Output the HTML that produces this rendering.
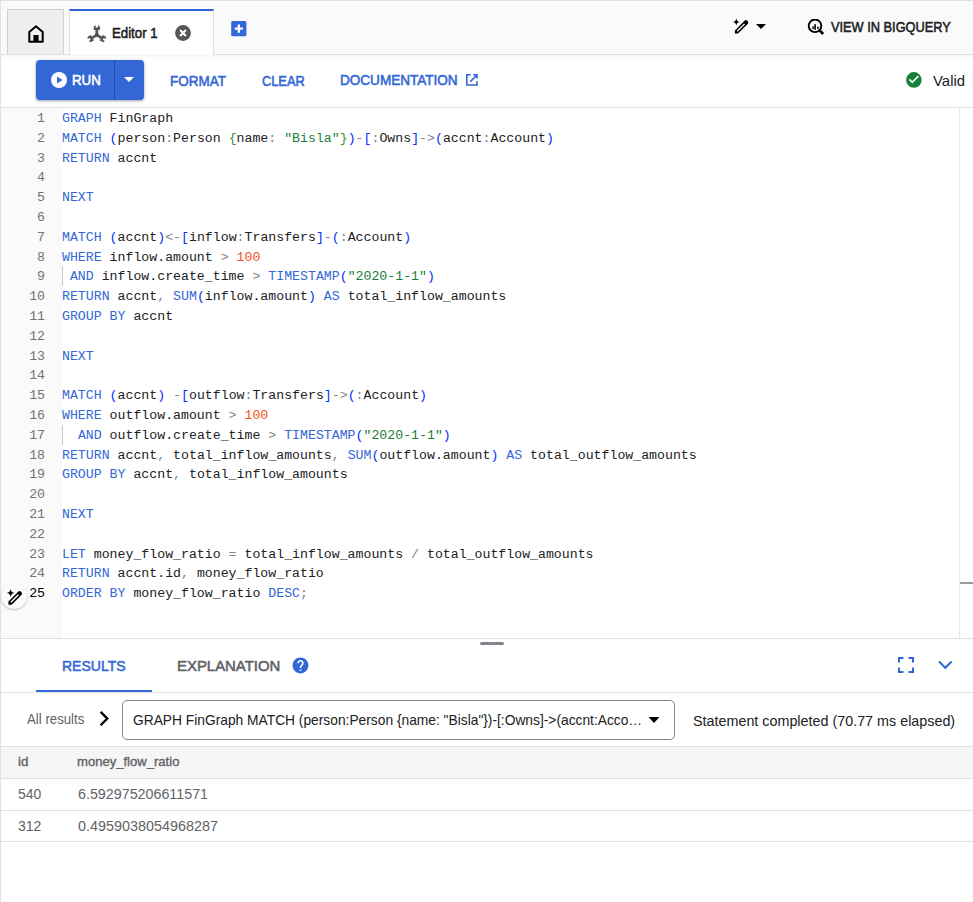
<!DOCTYPE html>
<html><head><meta charset="utf-8">
<style>
*{box-sizing:border-box;margin:0;padding:0}
html,body{width:973px;height:902px;overflow:hidden;background:#fff;font-family:"Liberation Sans",sans-serif;color:#202124}
.abs{position:absolute}
#frame{position:absolute;left:0;top:0;width:973px;height:902px;border-left:1px solid #e0e0e0;border-top:1px solid #e0e0e0}
#tabbar{position:absolute;left:1px;top:1px;width:972px;height:54px;background:#fafafa;border-bottom:1px solid #e0e0e0}
#hometab{position:absolute;left:7px;top:9px;width:57px;height:45px;background:#efefef;border:1px solid #d0d0d0;border-bottom:none}
#edtab{position:absolute;left:69px;top:9px;width:145px;height:46px;background:#fff;border-right:1px solid #dedede;border-left:1px solid #e0e0e0;border-top:2px solid #2a62d8}
.t14m{font-size:14px;font-weight:bold}
#toolbar{position:absolute;left:1px;top:55px;width:972px;height:53px;background:linear-gradient(rgba(0,0,0,.035),rgba(0,0,0,0) 4px) #fff;border-bottom:1px solid #e0e0e0}
#run{position:absolute;left:36px;top:60px;width:108px;height:40px;background:#3367d6;border-radius:4px;box-shadow:0 1px 2px rgba(60,64,67,.3),0 1px 3px 1px rgba(60,64,67,.15)}
.btxt{position:absolute;color:#3367d6;font-size:14px;font-weight:bold;white-space:nowrap}
#editor{position:absolute;left:1px;top:108px;width:972px;height:531px;background:#fff;border-bottom:1px solid #e0e0e0}
#gutter{position:absolute;left:0;top:0;width:61px;height:530px;background:#fafafa}
#code{position:absolute;left:61px;top:1px;font-family:"Liberation Mono",monospace;font-size:13.22px;line-height:19.8px;white-space:pre;color:#202124}
#nums{position:absolute;left:0;top:1px;width:44px;text-align:right;white-space:pre;font-family:"Liberation Mono",monospace;font-size:13.22px;line-height:19.8px;color:#737373}
.k{color:#3367d6}.b{color:#0431fa}.g{color:#319331}.s{color:#188038}.o{color:#80868b}.n{color:#f4511e}
.tx{position:absolute;white-space:nowrap;line-height:1}.m{-webkit-text-stroke:0.55px currentColor}.th{font-size:12.7px;-webkit-text-stroke:0.35px currentColor;color:#5f6368}.td{font-size:14px;color:#5f6368}
#results{position:absolute;left:1px;top:639px;width:972px;height:263px;background:#fff}
</style></head><body>
<div id="frame"></div>
<div id="tabbar"></div>
<div id="hometab"></div>
<div id="edtab"></div>
<!-- home icon -->
<svg class="abs" style="left:27px;top:24px" width="18" height="20" viewBox="0 0 18 20"><path d="M9 2.3L2.3 7.9V17.7H15.7V7.9Z" fill="none" stroke="#000" stroke-width="2" stroke-linejoin="round"/><rect x="6.4" y="11" width="5.2" height="7" fill="#000"/></svg>
<!-- wrench/graph icon -->
<svg class="abs" style="left:84px;top:22.5px" width="26" height="24" viewBox="-12.8 -12.5 26 24"><g fill="#555" transform="translate(0 -0.4) scale(0.92)"><path d="M-1.5 0V-5.6H-3.4V-8.6Q-3.4 -9.6 -2.4 -10.2L-1.2 -10.8V-8.2H1.2V-10.8L2.4 -10.2Q3.4 -9.6 3.4 -8.6V-5.6H1.5V0Z"/><path d="M-1.5 0V-5.6H-3.4V-8.6Q-3.4 -9.6 -2.4 -10.2L-1.2 -10.8V-8.2H1.2V-10.8L2.4 -10.2Q3.4 -9.6 3.4 -8.6V-5.6H1.5V0Z" transform="rotate(120)"/><path d="M-1.5 0V-5.6H-3.4V-8.6Q-3.4 -9.6 -2.4 -10.2L-1.2 -10.8V-8.2H1.2V-10.8L2.4 -10.2Q3.4 -9.6 3.4 -8.6V-5.6H1.5V0Z" transform="rotate(240)"/><circle r="2.2"/></g></svg>
<div id="t_editor" class="tx m" style="left:112.20px;top:26.40px;font-size:14.5px;color:#202124;transform:scaleX(0.9120);transform-origin:0 0">Editor 1</div>
<svg class="abs" style="left:175px;top:24.6px" width="16" height="16" viewBox="0 0 16 16"><circle cx="8" cy="8" r="7.9" fill="#555"/><path d="M5.1 5.1L10.9 10.9M10.9 5.1L5.1 10.9" stroke="#fff" stroke-width="2.1"/></svg>
<svg class="abs" style="left:231px;top:21px" width="16" height="16" viewBox="0 0 16 16"><rect x="0.2" y="0" width="15.2" height="15.3" rx="1.5" fill="#3367d6"/><path d="M7.8 3.5V11.8M3.7 7.65H11.9" stroke="#fff" stroke-width="2.3"/></svg>
<!-- right tab bar -->
<svg class="abs" style="left:726px;top:12px" width="26" height="26" viewBox="0 0 26 26"><path d="M10.3 6.2Q10.6 9.7 14.1 10Q10.6 10.3 10.3 13.8Q10 10.3 6.5 10Q10 9.7 10.3 6.2Z" fill="#000"/><g transform="translate(8.9 21.6) rotate(-45)"><path d="M0 0L2.2 -2.2H16.2Q17.7 -2.2 17.7 -0.7V0.7Q17.7 2.2 16.2 2.2H2.2Z" fill="#000"/><path d="M3.3 -0.65H13.6V0.65H3.3Z" fill="#fafafa"/></g></svg>
<svg class="abs" style="left:756px;top:24px" width="10" height="5" viewBox="0 0 10 5"><path d="M0 0H10L5 5Z" fill="#000"/></svg>
<svg class="abs" style="left:807px;top:19px" width="18" height="17" viewBox="0 0 18 17"><circle cx="8" cy="6.8" r="6.3" fill="none" stroke="#000" stroke-width="1.9"/><path d="M12.6 11.4L16.2 15" stroke="#000" stroke-width="2.6"/><rect x="5.4" y="7.3" width="1.4" height="2.7" fill="#000"/><rect x="7.3" y="5.2" width="1.6" height="5.6" fill="#000"/><rect x="10.2" y="7.7" width="1.5" height="2.2" fill="#000"/></svg>
<div id="t_view" class="tx m" style="left:831.00px;top:20.40px;font-size:14.5px;color:#202124;transform:scaleX(0.8817);transform-origin:0 0">VIEW IN BIGQUERY</div>

<div id="toolbar"></div>
<div id="run"></div>
<div class="abs" style="left:114px;top:60px;width:1px;height:40px;background:#1f4fa8"></div>
<svg class="abs" style="left:51px;top:72px" width="16" height="16" viewBox="0 0 16 16"><circle cx="8" cy="8" r="8" fill="#fff"/><path d="M6 4.5L11.5 8 6 11.5Z" fill="#3367d6"/></svg>
<div id="t_run" class="tx m" style="left:72.20px;top:73.00px;font-size:14.5px;color:#fff;transform:scaleX(0.9167);transform-origin:0 0">RUN</div>
<svg class="abs" style="left:124px;top:77px" width="10" height="5" viewBox="0 0 10 5"><path d="M0 0H10L5 5Z" fill="#fff"/></svg>
<div id="t_format" class="tx m" style="left:169.80px;top:74.40px;font-size:14.5px;color:#3367d6;transform:scaleX(0.9300);transform-origin:0 0">FORMAT</div>
<div id="t_clear" class="tx m" style="left:262.20px;top:74.40px;font-size:14.5px;color:#3367d6;transform:scaleX(0.8834);transform-origin:0 0">CLEAR</div>
<div id="t_doc" class="tx m" style="left:339.60px;top:73.20px;font-size:14.5px;color:#3367d6;transform:scaleX(0.9342);transform-origin:0 0">DOCUMENTATION</div>
<svg class="abs" style="left:466px;top:74px" width="12" height="12" viewBox="0 0 12 12"><path d="M4.7 0.8H0.8V11H11V7.2M7.2 0.8H11V4.6M4.2 7.8L10.6 1.4" fill="none" stroke="#3367d6" stroke-width="1.6"/></svg>
<svg class="abs" style="left:906px;top:72px" width="16" height="16" viewBox="0 0 16 16"><circle cx="7.9" cy="7.9" r="7.8" fill="#188038"/><path d="M3.4 7.4L6.2 10.3 12.3 4.1" fill="none" stroke="#fff" stroke-width="1.6"/></svg>
<div id="t_valid" class="tx" style="left:933.40px;top:73.40px;font-size:15px;color:#202124;transform:scaleX(0.9939);transform-origin:0 0">Valid</div>

<div id="editor">
<div id="gutter"></div>
<div class="abs" style="left:958px;top:0;width:1px;height:530px;background:#e8e8e8"></div>
<div class="abs" style="left:959px;top:474px;width:13px;height:2px;background:#999"></div>
<div class="abs" style="left:61px;top:158px;width:1px;height:20px;background:#c8c8c8"></div>
<div class="abs" style="left:61px;top:317px;width:1px;height:20px;background:#c8c8c8"></div>
<div class="abs" style="left:0px;top:475px;width:26px;height:26px;border-radius:50%;background:#fcfcfc;box-shadow:0 1px 2px rgba(0,0,0,.25)"></div>
<svg class="abs" style="left:0px;top:475px" width="26" height="26" viewBox="0 0 26 26"><path d="M9.6 5.8Q9.9 9.6 13.7 9.9Q9.9 10.2 9.6 14Q9.3 10.2 5.5 9.9Q9.3 9.6 9.6 5.8Z" fill="#000"/><g transform="translate(7.4 21.7) rotate(-45)"><path d="M0 0L2.3 -2.3H16.4Q18 -2.3 18 -0.7V0.7Q18 2.3 16.4 2.3H2.3Z" fill="#000"/><path d="M3.4 -0.7H14.2V0.7H3.4Z" fill="#fcfcfc"/></g></svg>
<div id="nums">1
2
3
4
5
6
7
8
9
10
11
12
13
14
15
16
17
18
19
20
21
22
23
24
<span style="color:#000">25</span></div>
<div id="code"><span class="k">GRAPH</span> FinGraph
<span class="k">MATCH</span> <span class="b">(</span>person<span class="o">:</span>Person <span class="g">{</span>name<span class="o">:</span> <span class="s">"Bisla"</span><span class="g">}</span><span class="b">)</span><span class="o">-</span><span class="b">[</span><span class="o">:</span>Owns<span class="b">]</span><span class="o">-&gt;</span><span class="b">(</span>accnt<span class="o">:</span>Account<span class="b">)</span>
<span class="k">RETURN</span> accnt

<span class="k">NEXT</span>

<span class="k">MATCH</span> <span class="b">(</span>accnt<span class="b">)</span><span class="o">&lt;-</span><span class="b">[</span>inflow<span class="o">:</span>Transfers<span class="b">]</span><span class="o">-</span><span class="b">(</span><span class="o">:</span>Account<span class="b">)</span>
<span class="k">WHERE</span> inflow.amount <span class="o">&gt;</span> <span class="n">100</span>
 <span class="k">AND</span> inflow.create_time <span class="o">&gt;</span> <span class="k">TIMESTAMP</span><span class="b">(</span><span class="s">"2020-1-1"</span><span class="b">)</span>
<span class="k">RETURN</span> accnt<span class="o">,</span> <span class="k">SUM</span><span class="b">(</span>inflow.amount<span class="b">)</span> <span class="k">AS</span> total_inflow_amounts
<span class="k">GROUP BY</span> accnt

<span class="k">NEXT</span>

<span class="k">MATCH</span> <span class="b">(</span>accnt<span class="b">)</span> <span class="o">-</span><span class="b">[</span>outflow<span class="o">:</span>Transfers<span class="b">]</span><span class="o">-&gt;</span><span class="b">(</span><span class="o">:</span>Account<span class="b">)</span>
<span class="k">WHERE</span> outflow.amount <span class="o">&gt;</span> <span class="n">100</span>
  <span class="k">AND</span> outflow.create_time <span class="o">&gt;</span> <span class="k">TIMESTAMP</span><span class="b">(</span><span class="s">"2020-1-1"</span><span class="b">)</span>
<span class="k">RETURN</span> accnt<span class="o">,</span> total_inflow_amounts<span class="o">,</span> <span class="k">SUM</span><span class="b">(</span>outflow.amount<span class="b">)</span> <span class="k">AS</span> total_outflow_amounts
<span class="k">GROUP BY</span> accnt<span class="o">,</span> total_inflow_amounts

<span class="k">NEXT</span>

<span class="k">LET</span> money_flow_ratio <span class="o">=</span> total_inflow_amounts <span class="o">/</span> total_outflow_amounts
<span class="k">RETURN</span> accnt.id<span class="o">,</span> money_flow_ratio
<span class="k">ORDER BY</span> money_flow_ratio <span class="k">DESC</span><span class="o">;</span></div>
</div>

<div id="results"></div>
<div class="abs" style="left:480px;top:642px;width:24px;height:3px;border-radius:2px;background:#80868b"></div>
<div id="t_results" class="tx m" style="left:62.20px;top:657.80px;font-size:15px;color:#3367d6;transform:scaleX(0.9332);transform-origin:0 0">RESULTS</div>
<div class="abs" style="left:36px;top:690px;width:116px;height:2px;background:#3367d6"></div>
<div id="t_expl" class="tx m" style="left:177.40px;top:657.80px;font-size:15px;color:#5f6368;transform:scaleX(0.9944);transform-origin:0 0">EXPLANATION</div>
<svg class="abs" style="left:291px;top:655.6px" width="19" height="19" viewBox="0 0 24 24" preserveAspectRatio="none"><g transform="scale(1)"><path fill="#3367d6" d="M12 2C6.48 2 2 6.48 2 12s4.48 10 10 10 10-4.48 10-10S17.52 2 12 2zm1 17h-2v-2h2v2zm2.07-7.750l-.9.92C13.450 12.9 13 13.5 13 15h-2v-.5c0-1.1.45-2.1 1.170-2.830l1.240-1.26c.370-.36.590-.86.590-1.41 0-1.1-.9-2-2-2s-2 .9-2 2H8c0-2.21 1.790-4 4-4s4 1.790 4 4c0 .88-.36 1.680-.93 2.250z"/></g></svg>
<svg class="abs" style="left:898px;top:657px" width="16" height="16" viewBox="0 0 16 16"><path d="M1 5.5V1H5.5M10.5 1H15V5.5M15 10.5V15H10.5M5.5 15H1V10.5" fill="none" stroke="#3367d6" stroke-width="2"/></svg>
<svg class="abs" style="left:938px;top:660px" width="15" height="10" viewBox="0 0 15 10"><path d="M1 1.5L7.3 7.8 13.6 1.5" fill="none" stroke="#3367d6" stroke-width="2"/></svg>
<div class="abs" style="left:1px;top:692px;width:972px;height:1px;background:#e0e0e0"></div>
<div id="t_all" class="tx" style="left:27.20px;top:712.0px;font-size:14px;color:#5f6368;transform:scaleX(0.9450);transform-origin:0 0">All results</div>
<svg class="abs" style="left:99px;top:710px" width="12" height="17" viewBox="0 0 12 17"><path d="M1.6 1.9L8.3 8.6 1.6 15.3" fill="none" stroke="#000" stroke-width="2.3"/></svg>
<div class="abs" style="left:122px;top:700px;width:553px;height:40px;border:1px solid #80868b;border-radius:5px"></div>
<div id="t_graph" class="tx" style="left:132.80px;top:713.00px;font-size:14.5px;color:#202124;transform:scaleX(0.9502);transform-origin:0 0">GRAPH FinGraph MATCH (person:Person {name: "Bisla"})-[:Owns]-&gt;(accnt:Acco…</div>
<svg class="abs" style="left:648px;top:717px" width="12" height="6" viewBox="0 0 12 6"><path d="M0.5 0H11.5L6 6Z" fill="#000"/></svg>
<div id="t_stmt" class="tx" style="left:693.40px;top:713.60px;font-size:14.5px;color:#202124;transform:scaleX(0.9886);transform-origin:0 0">Statement completed (70.77 ms elapsed)</div>
<div class="abs" style="left:1px;top:746px;width:972px;height:33px;background:#f5f5f5;border-top:1px solid #e0e0e0;border-bottom:1px solid #e0e0e0"></div>
<div id="t_hid" class="tx th" style="left:18.20px;top:756.00px;transform:scaleX(1.0509);transform-origin:0 0">id</div>
<div id="t_hmf" class="tx th" style="left:77.00px;top:756.00px;transform:scaleX(1.0300);transform-origin:0 0">money_flow_ratio</div>
<div id="t_r1a" class="tx td" style="left:18.00px;top:787.20px;transform:scaleX(0.9920);transform-origin:0 0">540</div>
<div id="t_r1b" class="tx td" style="left:77.80px;top:787.20px;transform:scaleX(1.0205);transform-origin:0 0">6.592975206611571</div>
<div class="abs" style="left:1px;top:810px;width:972px;height:1px;background:#e0e0e0"></div>
<div id="t_r2a" class="tx td" style="left:18.00px;top:818.60px;transform:scaleX(1.0000);transform-origin:0 0">312</div>
<div id="t_r2b" class="tx td" style="left:77.80px;top:818.60px;transform:scaleX(1.0267);transform-origin:0 0">0.4959038054968287</div>
<div class="abs" style="left:1px;top:841px;width:972px;height:1px;background:#e0e0e0"></div>
</body></html>
